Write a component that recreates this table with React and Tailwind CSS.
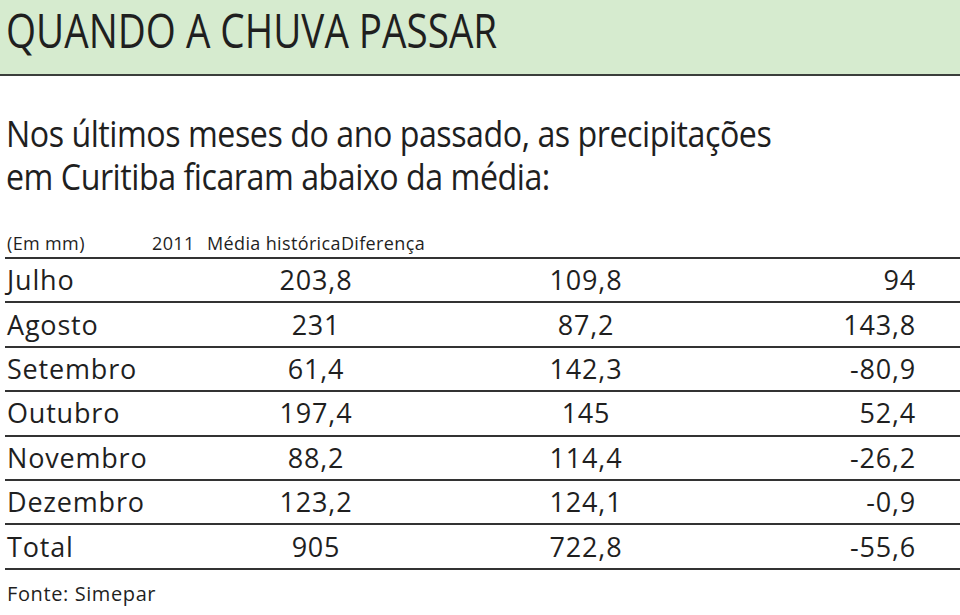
import React from "react";

const rows = [
  ["Julho", "203,8", "109,8", "94"],
  ["Agosto", "231", "87,2", "143,8"],
  ["Setembro", "61,4", "142,3", "-80,9"],
  ["Outubro", "197,4", "145", "52,4"],
  ["Novembro", "88,2", "114,4", "-26,2"],
  ["Dezembro", "123,2", "124,1", "-0,9"],
  ["Total", "905", "722,8", "-55,6"],
];

export default function App() {
  return (
    <div className="w-[960px] h-[615px] bg-white text-[#1f1f1f] overflow-hidden" style={{ fontFamily: '"Open Sans", sans-serif' }}>
      <div className="h-[76px] bg-[#d6ebcf] border-b-2 border-[#3b3e3b] pl-[6px] pt-[2px]">
        <h1 className="origin-left scale-x-[0.805] whitespace-nowrap text-[48px] leading-[56px] font-normal">QUANDO A CHUVA PASSAR</h1>
      </div>
      <div className="pl-[6px] pt-[36px] text-[36px] leading-[43px] tracking-[-0.015em]">
        <p className="origin-left scale-x-[0.895] whitespace-nowrap">Nos últimos meses do ano passado, as precipitações</p>
        <p className="origin-left scale-x-[0.895] whitespace-nowrap">em Curitiba ficaram abaixo da média:</p>
      </div>
      <div className="ml-[5px] mt-[28px]">
        <div className="h-[33px] border-b-2 border-[#333] flex items-end pb-[4px] text-[18px] leading-[20px] tracking-[0.02em]">
          <span className="pl-[2px] w-[147px]">(Em mm)</span>
          <span className="w-[55px]">2011</span>
          <span>Média histórica</span>
          <span>Diferença</span>
        </div>
        {rows.map((r) => (
          <div key={r[0]} className="h-[44.4px] border-b-2 border-[#333] grid grid-cols-[225px_172px_368px_1fr] items-center text-[27px] leading-[30px] tracking-[0.03em]">
            <span className="pl-[2px]">{r[0]}</span>
            <span className="text-center">{r[1]}</span>
            <span className="text-center">{r[2]}</span>
            <span className="text-right pr-[44px]">{r[3]}</span>
          </div>
        ))}
        <div className="pt-[12px] text-[20px] leading-[24px] pl-[2px] tracking-[0.03em]">Fonte: Simepar</div>
      </div>
    </div>
  );
}
